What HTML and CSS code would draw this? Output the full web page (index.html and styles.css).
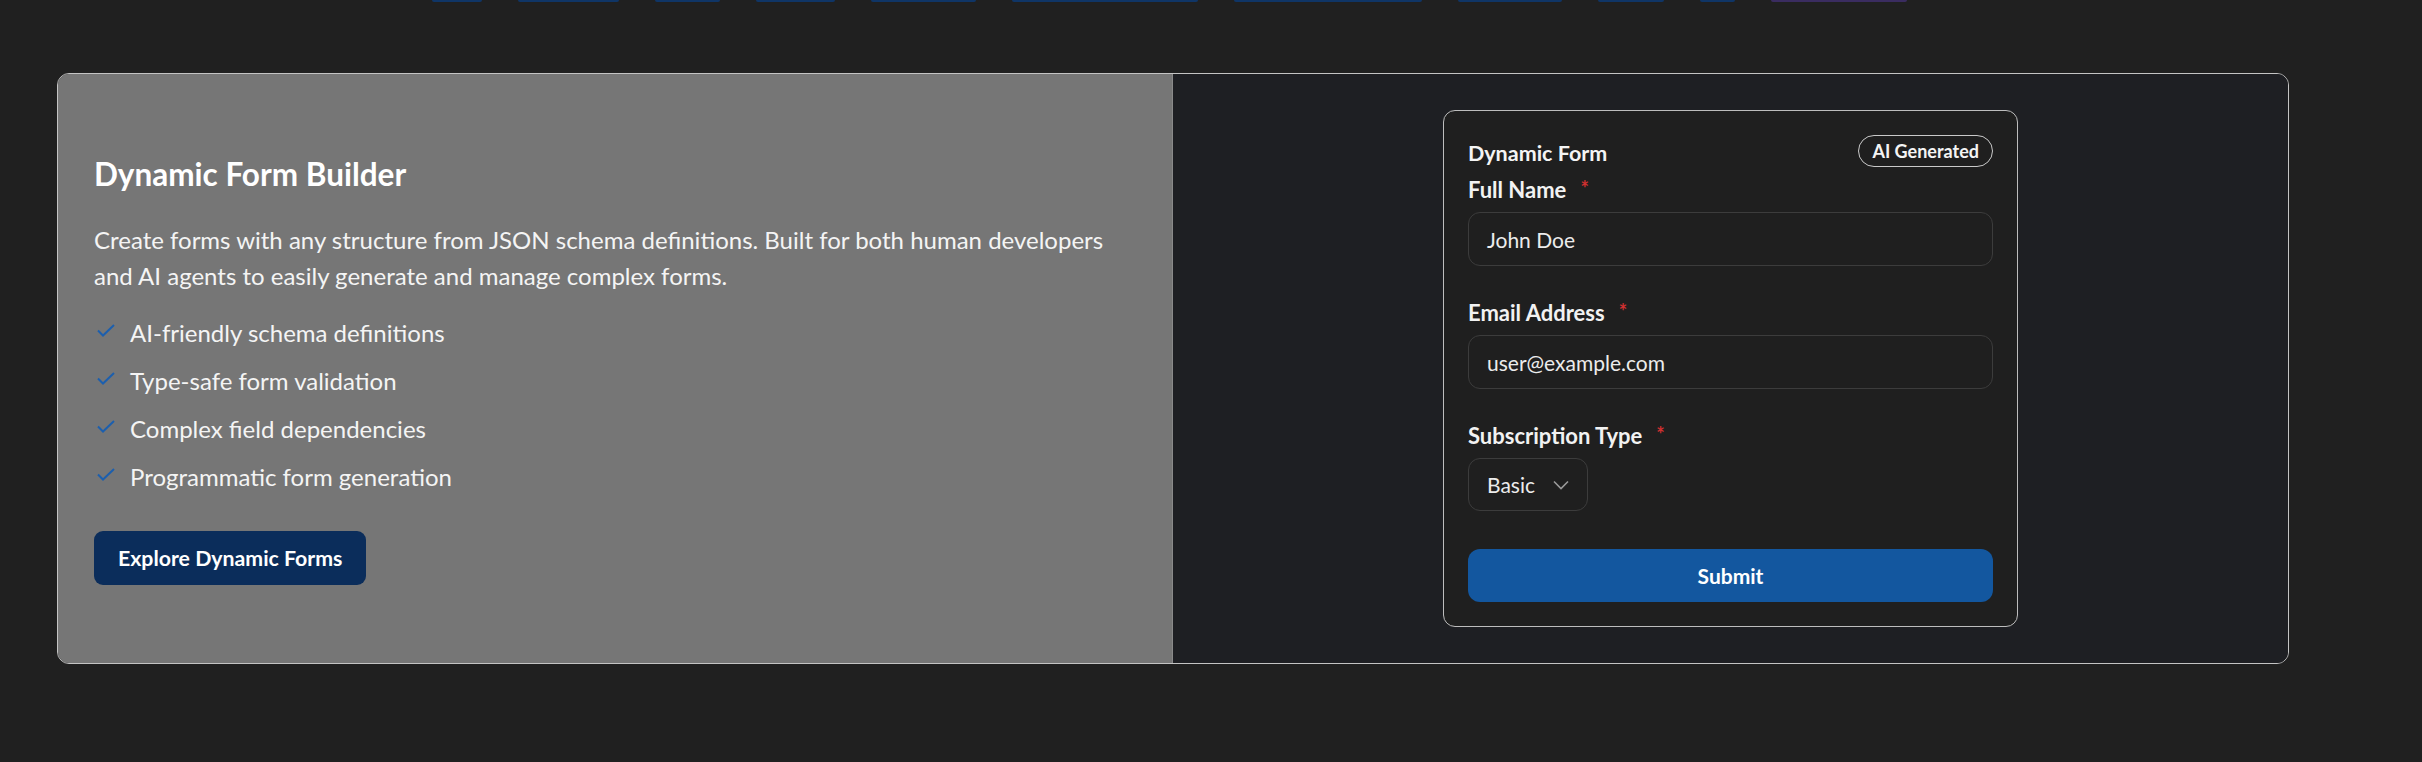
FILE: index.html
```html
<!DOCTYPE html>
<html lang="en">
<head>
<meta charset="utf-8">
<title>Dynamic Form Builder</title>
<link rel="stylesheet" href="styles.css">
</head>
<body>
<div class="tabs-edge">
  <span class="tab-edge" style="width:50px"></span>
  <span class="tab-edge" style="width:101px"></span>
  <span class="tab-edge" style="width:65px"></span>
  <span class="tab-edge" style="width:79px"></span>
  <span class="tab-edge" style="width:105px"></span>
  <span class="tab-edge" style="width:186px"></span>
  <span class="tab-edge" style="width:188px"></span>
  <span class="tab-edge" style="width:104px"></span>
  <span class="tab-edge" style="width:66px"></span>
  <span class="tab-edge" style="width:35px"></span>
  <span class="tab-edge tab-edge-purple" style="width:136px"></span>
</div>
<main class="section">
  <div class="feature-card">
    <div class="feature-info">
      <h2 class="feature-title">Dynamic Form Builder</h2>
      <p class="feature-desc">Create forms with any structure from JSON schema definitions. Built for both human developers and AI agents to easily generate and manage complex forms.</p>
      <ul class="feature-list">
        <li><svg class="check" viewBox="0 0 18 13"><path d="M1 6.5 L6 11.5 L17 1"/></svg><span>AI-friendly schema definitions</span></li>
        <li><svg class="check" viewBox="0 0 18 13"><path d="M1 6.5 L6 11.5 L17 1"/></svg><span>Type-safe form validation</span></li>
        <li><svg class="check" viewBox="0 0 18 13"><path d="M1 6.5 L6 11.5 L17 1"/></svg><span>Complex field dependencies</span></li>
        <li><svg class="check" viewBox="0 0 18 13"><path d="M1 6.5 L6 11.5 L17 1"/></svg><span>Programmatic form generation</span></li>
      </ul>
      <a class="explore-btn" href="#">Explore Dynamic Forms</a>
    </div>
    <div class="feature-demo">
      <form class="demo-form">
        <div class="form-head">
          <span class="form-title">Dynamic Form</span>
          <span class="badge">AI Generated</span>
        </div>
        <div class="field">
          <label class="field-label">Full Name<span class="req">*</span></label>
          <div class="text-input">John Doe</div>
        </div>
        <div class="field">
          <label class="field-label">Email Address<span class="req">*</span></label>
          <div class="text-input">user@example.com</div>
        </div>
        <div class="field field-last">
          <label class="field-label">Subscription Type<span class="req">*</span></label>
          <div class="select">
            <span>Basic</span>
            <svg class="chev" viewBox="0 0 16 10"><path d="M1 1.5 L8 8.5 L15 1.5"/></svg>
          </div>
        </div>
        <div class="submit-btn">Submit</div>
      </form>
    </div>
  </div>
</main>
</body>
</html>
```
FILE: styles.css
```css
* { box-sizing: border-box; }
html, body { margin: 0; padding: 0; }
body {
  background: #202020;
  font-family: Lato, "Open Sans", sans-serif;
  color: #f2f2f2;
  width: 2422px;
  height: 762px;
  overflow: hidden;
}
.tabs-edge {
  display: flex;
  gap: 36px;
  padding-left: 432px;
  height: 2px;
}
.tab-edge {
  display: block;
  height: 2px;
  background: #0f3566;
  border-radius: 0 0 2px 2px;
}
.tab-edge-purple { background: #3a2c60; }
.section {
  padding: 71px 0 0 57px;
}
.feature-card {
  width: 2232px;
  height: 591px;
  display: grid;
  grid-template-columns: 1fr 1fr;
  border: 1px solid #c4c4c4;
  border-radius: 12px;
  overflow: hidden;
}
.feature-info {
  background: #767676;
  padding: 0 36px;
  display: flex;
  flex-direction: column;
  justify-content: center;
  border-right: 1px solid #8a8a8a;
}
.feature-title {
  margin: 0 0 27px;
  font-size: 31.5px;
  line-height: 42px;
  font-weight: 700;
  color: #ffffff;
}
.feature-desc {
  margin: 0 0 21px;
  font-size: 24px;
  line-height: 36px;
  color: #f4f4f4;
  max-width: 1042px;
}
.feature-list {
  list-style: none;
  margin: 0 0 36px;
  padding: 0;
  display: flex;
  flex-direction: column;
  gap: 12px;
}
.feature-list li {
  display: flex;
  align-items: flex-start;
  font-size: 24px;
  line-height: 36px;
  color: #f4f4f4;
}
.check {
  width: 18px;
  height: 13px;
  margin: 9px 15px 0 3px;
  flex: none;
  fill: none;
  stroke: #1c5fae;
  stroke-width: 2;
}
.explore-btn {
  align-self: flex-start;
  display: flex;
  align-items: center;
  height: 54px;
  padding: 0 24px;
  background: #0b2d5b;
  color: #ffffff;
  font-weight: 700;
  font-size: 21.3px;
  text-decoration: none;
  border-radius: 9px;
}
.feature-demo {
  background: #1e1f23;
  display: flex;
  align-items: center;
  justify-content: center;
}
.demo-form {
  width: 575px;
  height: 517px;
  background: #1f1f1f;
  border: 1px solid #bdbdbd;
  border-radius: 12px;
  padding: 24px;
  display: flex;
  flex-direction: column;
}
.form-head {
  display: flex;
  align-items: center;
  justify-content: space-between;
  height: 32px;
  margin-bottom: 7px;
}
.form-title {
  font-size: 21.5px;
  font-weight: 700;
  color: #f4f4f4;
  padding-top: 4px;
}
.badge {
  height: 32px;
  display: flex;
  align-items: center;
  padding: 0 13px;
  border: 1px solid #c9c9c9;
  border-radius: 999px;
  font-size: 18px;
  font-weight: 700;
  color: #f4f4f4;
}
.field { margin-bottom: 31px; }
.field-last { margin-bottom: 38px; }
.field-label {
  display: block;
  font-size: 22px;
  line-height: 31px;
  font-weight: 700;
  color: #f2f2f2;
  margin-bottom: 7px;
}
.req {
  color: #d03030;
  margin-left: 14px;
  font-size: 20px;
  vertical-align: top;
  line-height: 28px;
}
.text-input {
  height: 54px;
  border: 1px solid #3c3c3c;
  border-radius: 12px;
  display: flex;
  align-items: center;
  padding: 0 18px;
  font-size: 21px;
  color: #ececec;
}
.select {
  width: 120px;
  height: 53px;
  border: 1px solid #3c3c3c;
  border-radius: 12px;
  display: flex;
  align-items: center;
  padding: 0 0 0 18px;
  font-size: 21px;
  color: #ececec;
  gap: 18px;
}
.chev {
  width: 16px;
  height: 10px;
  fill: none;
  stroke: #9a9a9a;
  stroke-width: 1.6;
}
.submit-btn {
  height: 54px;
  border-radius: 12px;
  background: #13579f;
  color: #ffffff;
  font-size: 21px;
  font-weight: 700;
  display: flex;
  align-items: center;
  justify-content: center;
}
```
